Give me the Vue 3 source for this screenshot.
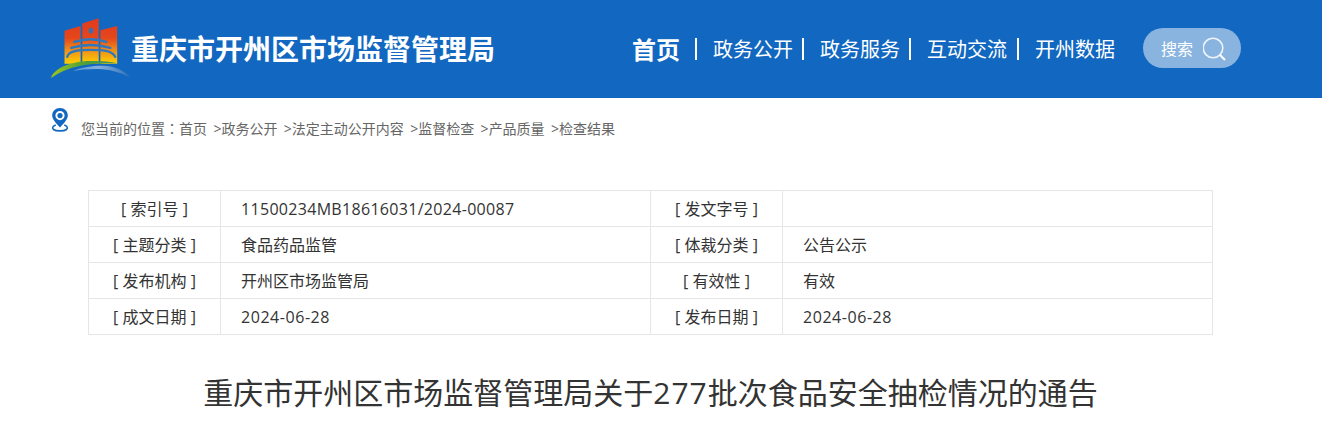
<script setup>
const navItems = ['政务公开', '政务服务', '互动交流']
const crumbs = ['政务公开', '法定主动公开内容', '监督检查', '产品质量', '检查结果']
const rows = [
  [{ t: '[ 索引号 ]' }, { t: '11500234MB18616031/2024-00087', k: 'code' }, { t: '[ 发文字号 ]' }, { t: '' }],
  [{ t: '[ 主题分类 ]' }, { t: '食品药品监管', k: 'cjk' }, { t: '[ 体裁分类 ]' }, { t: '公告公示', k: 'cjk' }],
  [{ t: '[ 发布机构 ]' }, { t: '开州区市场监管局', k: 'cjk' }, { t: '[ 有效性 ]' }, { t: '有效', k: 'cjk' }],
  [{ t: '[ 成文日期 ]' }, { t: '2024-06-28', k: 'date' }, { t: '[ 发布日期 ]' }, { t: '2024-06-28', k: 'date' }],
]
</script>

<template>
  <div class="page">
    <header class="header">
      <div class="brand">
        <svg class="logo" width="82" height="80" viewBox="0 0 82 80">
          <defs>
            <linearGradient id="lg" gradientUnits="userSpaceOnUse" x1="0" y1="18" x2="0" y2="63">
              <stop offset="0" stop-color="#e03c1e" />
              <stop offset="0.42" stop-color="#e5461b" />
              <stop offset="0.7" stop-color="#f0901a" />
              <stop offset="1" stop-color="#fdd000" />
            </linearGradient>
            <linearGradient id="sw" x1="0" y1="0" x2="1" y2="0">
              <stop offset="0" stop-color="#9cc71c" />
              <stop offset="0.5" stop-color="#4fa03a" />
              <stop offset="1" stop-color="#3c8f66" />
            </linearGradient>
            <linearGradient id="sb" x1="0" y1="0" x2="1" y2="0">
              <stop offset="0" stop-color="#5c95d2" />
              <stop offset="0.45" stop-color="#86aedb" />
              <stop offset="1" stop-color="#2f72bb" />
            </linearGradient>
          </defs>
          <path fill="url(#lg)" d="M14.700 29.700 L31 24.700 L31 63 L14.700 63 Z M32.700 22.300 L49.300 17 L49.300 63 L32.700 63 Z M51 29 L68 24.700 L68 63 L51 63 Z" />
          <ellipse cx="41.500" cy="29.500" rx="2.200" ry="3" fill="#2f72bb" />
          <g fill="none" stroke="#2f78bd" stroke-linecap="round">
            <path stroke-width="2.400" d="M24.500 41 Q41 35.500 57 41" />
            <path stroke-width="2.400" d="M21.500 47 Q41 41 61 47" />
            <path stroke-width="2.400" d="M17.500 56 C19 49.500 30 49 41 49 C52 49 63 49.500 66 56" />
          </g>
          <path fill="url(#sw)" d="M1 77.500 C4 68 20 60.500 41 60.300 C52 60.200 62 61 68 62.500 C48 62 30 64 18 68.500 C10 71.500 5 74.500 1 77.500 Z" />
          <path fill="url(#sb)" d="M23 70.500 C33 66 45 64.800 54 65 C66 65.500 76 70 81 77 C73 72.500 64 69.500 53 68.500 C42 67.800 32 68.800 23 70.500 Z" />
        </svg>
        <h1 class="site-name">重庆市开州区市场监督管理局</h1>
      </div>
      <nav class="nav">
        <a class="nav-home">首页</a>
        <i class="bar home-bar"></i>
        <template v-for="(item, i) in navItems" :key="item">
          <a class="nav-link">{{ item }}</a>
          <i class="bar" :class="{ 'bar-last': i === navItems.length - 1 }"></i>
        </template>
        <a class="nav-link">开州数据</a>
        <div class="search">
          <span>搜索</span>
          <svg width="26" height="26" viewBox="0 0 26 26" fill="none" stroke="#fff">
            <circle cx="10" cy="13" r="9.800" stroke-width="1.600" stroke-opacity="0.85" />
            <path d="M17 20 L22 25" stroke-width="2" />
          </svg>
        </div>
      </nav>
    </header>

    <div class="crumbs">
      <svg class="pin" width="18" height="24" viewBox="0 0 18 24">
        <path fill="#1268c0" fill-rule="evenodd" d="M9 0 C13.500 0 16.800 3.300 16.800 7.600 C16.800 11.500 12.500 16 9 19.500 C5.500 16 1.200 11.500 1.200 7.600 C1.200 3.300 4.500 0 9 0 Z M9 3 A4.600 4.600 0 1 0 9 12.200 A4.600 4.600 0 1 0 9 3 Z" />
        <circle cx="9" cy="7.600" r="2.600" fill="#1268c0" />
        <path fill="none" stroke="#1268c0" stroke-width="1.600" d="M4.800 17 C1.800 17.800 0.800 20 2.500 21.500 C5 23.300 13 23.300 15.500 21.500 C17.200 20 16.200 17.800 13.200 17" />
      </svg>
      <p class="trail">您当前的位置<span class="colon">：</span>首页<template v-for="c in crumbs" :key="c"><span class="gt">&gt;</span>{{ c }}</template></p>
    </div>

    <table class="meta">
      <colgroup>
        <col class="c1" /><col class="c2" /><col class="c3" /><col class="c4" />
      </colgroup>
      <tbody>
        <tr v-for="row in rows" :key="row[0].t">
          <td class="lab">{{ row[0].t }}</td>
          <td class="val" :class="row[1].k">{{ row[1].t }}</td>
          <td class="lab">{{ row[2].t }}</td>
          <td class="val" :class="row[3].k">{{ row[3].t }}</td>
        </tr>
      </tbody>
    </table>

    <h2 class="title">重庆市开州区市场监督管理局关于<span class="digits">277</span>批次食品安全抽检情况的通告</h2>
  </div>
</template>

<style>
html, body { margin: 0; background: #fff; }
</style>

<style scoped>
.page {
  width: 1322px;
  height: 430px;
  overflow: hidden;
  font-family: "Open Sans", "Noto Sans CJK SC", sans-serif;
  color: #333;
}
.header {
  height: 98px;
  background: #1268c0;
  display: flex;
  align-items: flex-start;
  justify-content: space-between;
  padding: 0 81px 0 50px;
  box-sizing: border-box;
}
.brand { display: flex; align-items: flex-start; }
.logo { display: block; margin-top: 1px; width: 81px; flex: none; overflow: visible; }
.site-name {
  margin: 29px 0 0;
  font-size: 28px;
  line-height: 40px;
  font-weight: 700;
  color: #fff;
  white-space: nowrap;
}
.nav {
  display: flex;
  align-items: center;
  height: 40px;
  margin-top: 28px;
  color: #fff;
}
.nav a { color: #fff; white-space: nowrap; }
.nav-home { font-size: 24px; font-weight: 700; }
.nav-link { font-size: 20px; }
.bar {
  display: block;
  width: 2px;
  height: 22px;
  background: #fff;
  margin: 1px 16px 0 9px;
}
.bar-last { margin-left: 10px; }
.home-bar { margin: 1px 16px 0 15px; }
.search {
  display: flex;
  align-items: center;
  justify-content: space-between;
  box-sizing: border-box;
  width: 98px;
  height: 40px;
  margin-left: 28px;
  padding: 0 12px 0 18px;
  border-radius: 20px;
  background: #8ab4e0;
  font-size: 16px;
}
.crumbs {
  display: flex;
  align-items: flex-start;
  height: 92px;
  padding: 10px 0 0 51px;
  box-sizing: border-box;
}
.pin { display: block; flex: none; }
.trail {
  margin: 12px 0 0 12px;
  font-size: 14px;
  line-height: 17px;
  color: #666;
  white-space: nowrap;
}
.colon { font-family: "Noto Sans CJK TC", sans-serif; }
.gt { margin-left: 6.400px; }
.meta {
  margin-left: 88px;
  width: 1125px;
  border-collapse: collapse;
  table-layout: fixed;
}
.c1, .c3 { width: 132px; }
.c2 { width: 430px; }
.meta td {
  height: 36px;
  padding: 0;
  box-sizing: border-box;
  border: 1px solid #e6e6e6;
  font-size: 16px;
  color: #333;
}
.meta td.lab { text-align: center; padding-bottom: 2px; }
.meta td.val { padding-left: 20px; }
.meta td.cjk { padding-bottom: 2px; }
.meta td.code { letter-spacing: 0.31px; }
.meta td.date { letter-spacing: 0.55px; }
.title {
  margin: 40px 0 0;
  width: 1301px;
  text-align: center;
  font-size: 30px;
  line-height: 36px;
  font-weight: 400;
  color: #333;
  white-space: nowrap;
}
.digits { letter-spacing: 1px; }
</style>
